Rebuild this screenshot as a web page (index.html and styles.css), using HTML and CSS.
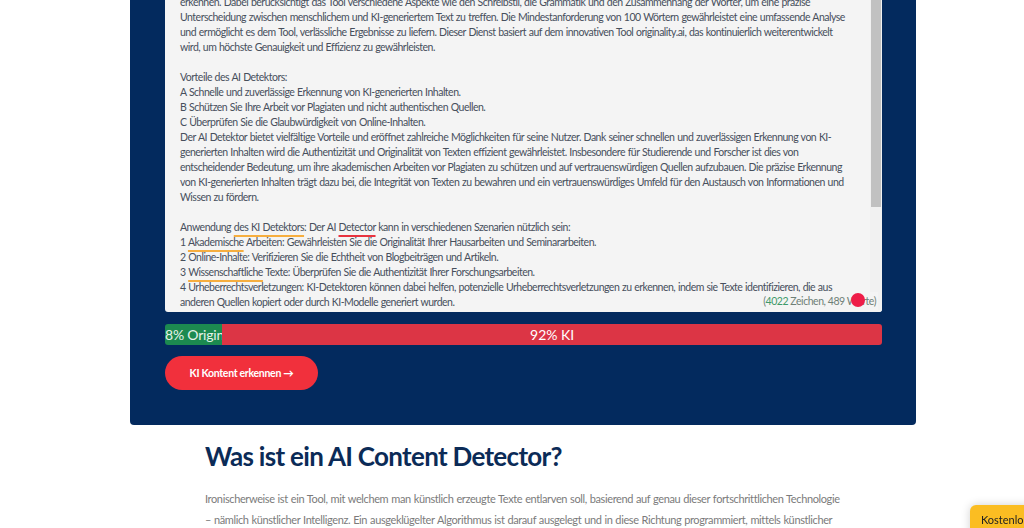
FILE: index.html
```html
<!DOCTYPE html>
<html lang="de">
<head>
    <meta charset="UTF-8">
    <meta name="viewport" content="width=device-width, initial-scale=1.0">
    <title>AI Content Detector</title>
    <link rel="stylesheet" href="styles.css">
</head>
<body>
    <section class="tool-panel">
        <div class="text-box">
            <div class="text-body">Der AI Detektor ist ein leistungsstarkes Werkzeug, das entwickelt wurde, um KI-generierte Inhalte zuverlässig zu
erkennen. Dabei berücksichtigt das Tool verschiedene Aspekte wie den Schreibstil, die Grammatik und den Zusammenhang der Wörter, um eine präzise
Unterscheidung zwischen menschlichem und KI-generiertem Text zu treffen. Die Mindestanforderung von 100 Wörtern gewährleistet eine umfassende Analyse
und ermöglicht es dem Tool, verlässliche Ergebnisse zu liefern. Dieser Dienst basiert auf dem innovativen Tool originality.ai, das kontinuierlich weiterentwickelt
wird, um höchste Genauigkeit und Effizienz zu gewährleisten.

Vorteile des AI Detektors:
A Schnelle und zuverlässige Erkennung von KI-generierten Inhalten.
B Schützen Sie Ihre Arbeit vor Plagiaten und nicht authentischen Quellen.
C Überprüfen Sie die Glaubwürdigkeit von Online-Inhalten.
Der AI Detektor bietet vielfältige Vorteile und eröffnet zahlreiche Möglichkeiten für seine Nutzer. Dank seiner schnellen und zuverlässigen Erkennung von KI-
generierten Inhalten wird die Authentizität und Originalität von Texten effizient gewährleistet. Insbesondere für Studierende und Forscher ist dies von
entscheidender Bedeutung, um ihre akademischen Arbeiten vor Plagiaten zu schützen und auf vertrauenswürdigen Quellen aufzubauen. Die präzise Erkennung
von KI-generierten Inhalten trägt dazu bei, die Integrität von Texten zu bewahren und ein vertrauenswürdiges Umfeld für den Austausch von Informationen und
Wissen zu fördern.

Anwendung <span class="spell warn">des KI Detektors</span>: Der AI <span class="spell error">Detector</span> kann in verschiedenen Szenarien nützlich sein:
1 <span class="spell warn">Akademische</span> Arbeiten: Gewährleisten Sie die Originalität Ihrer Hausarbeiten und Seminararbeiten.
2 Online-Inhalte: Verifizieren Sie die Echtheit von Blogbeiträgen und Artikeln.
3 <span class="spell warn">Wissenschaftliche</span> Texte: Überprüfen Sie die Authentizität Ihrer Forschungsarbeiten.
4 Urheberrechtsverletzungen: KI-Detektoren können dabei helfen, potenzielle Urheberrechtsverletzungen zu erkennen, indem sie Texte identifizieren, die aus
anderen Quellen kopiert oder durch KI-Modelle generiert wurden.</div>
            <div class="scrollbar"><div class="scrollbar-thumb"></div></div>
            <span class="counter">(<span class="counter-num">4022</span> Zeichen, 489 Worte)</span>
            <span class="pointer-dot"></span>
        </div>

        <div class="result-bar">
            <div class="result-original" style="width: 8%">8% Original</div>
            <div class="result-ki">92% KI</div>
        </div>

        <button class="btn-detect" type="button">KI Kontent erkennen →</button>
    </section>

    <section class="intro">
        <h2 class="intro-title">Was ist ein AI Content Detector?</h2>
        <p class="intro-text">Ironischerweise ist ein Tool, mit welchem man künstlich erzeugte Texte entlarven soll, basierend auf genau dieser fortschrittlichen Technologie<br>– nämlich künstlicher Intelligenz. Ein ausgeklügelter Algorithmus ist darauf ausgelegt und in diese Richtung programmiert, mittels künstlicher<br>Intelligenz zu erkennen, ob ein Text von einem Menschen geschrieben wurde.</p>
    </section>

    <a href="#" class="btn-trial">Kostenlos testen</a>
</body>
</html>
```

FILE: styles.css
```css
* { margin: 0; padding: 0; box-sizing: border-box; }
:root { --navy: #032a5e; --text: #474f5c; --green: #1c8a50; --red: #dc3545; --cta: #f1303c; }
body { background: #fff; font-family: 'Lato', 'Open Sans', sans-serif; overflow: hidden; height: 528px; }

/* Detector panel */
.tool-panel { width: 786px; margin: -20px 0 0 130px; background: var(--navy); padding: 0 34px 35px 35px; border-radius: 0 0 4px 4px; }
.text-box { position: relative; display: flex; height: 332px; background: #f4f4f4; border-radius: 0 0 3px 3px; overflow: hidden; }
.text-body { flex: 1; padding: 0 15px; font-size: 10.5px; line-height: 15px; letter-spacing: -0.5px; word-spacing: 0.5px; color: var(--text); white-space: pre; overflow: hidden; }
.spell { text-decoration: underline; text-decoration-thickness: 1.5px; text-underline-offset: 3.5px; }
.spell.warn { text-decoration-color: #f6ae3f; }
.spell.error { text-decoration-color: #e8333f; }
.scrollbar { width: 12px; background: #f1f1f1; padding: 0 1px; }
.scrollbar-thumb { height: 227px; background: #c1c1c1; }
.counter { position: absolute; right: 4px; bottom: 2px; padding: 2px 2px 2px 4px; background: rgba(244,244,244,0.9); font-size: 10.5px; line-height: 14px; letter-spacing: -0.45px; color: #6f7f77; }
.counter-num { color: #3f9a6a; }
.pointer-dot { position: absolute; right: 17px; bottom: 5px; width: 14px; height: 14px; border-radius: 50%; background: #ee1d48; }

.result-bar { display: flex; height: 21px; margin-top: 12px; border-radius: 3px; overflow: hidden; font-size: 14px; line-height: 21px; color: #fff; }
.result-original { background: var(--green); white-space: nowrap; overflow: hidden; color: #e6f2ea; letter-spacing: -0.2px; }
.result-ki { flex: 1; background: var(--red); text-align: center; }

.btn-detect { display: block; width: 153px; height: 34px; margin-top: 11px; border: none; border-radius: 17px; background: var(--cta); color: #fff; font-family: inherit; font-size: 10.5px; letter-spacing: -0.3px; font-weight: 700; cursor: pointer; }

/* Intro text below the tool */
.intro { width: 660px; margin-left: 205px; padding-top: 14px; }
.intro-title { font-size: 26px; line-height: 34px; letter-spacing: -0.7px; font-weight: 700; color: #0b2b57; }
.intro-text { margin-top: 15px; font-size: 11px; line-height: 21px; letter-spacing: -0.38px; word-spacing: 0.5px; color: #7b7b7b; white-space: nowrap; }

.btn-trial { position: fixed; left: 970px; top: 505px; width: 120px; height: 40px; padding: 8px 11px; background: #fbbd22; border-radius: 6px 0 0 0; box-shadow: 0 0 10px rgba(0,0,0,0.18); color: #222; font-size: 11px; text-decoration: none; white-space: nowrap; }
```
